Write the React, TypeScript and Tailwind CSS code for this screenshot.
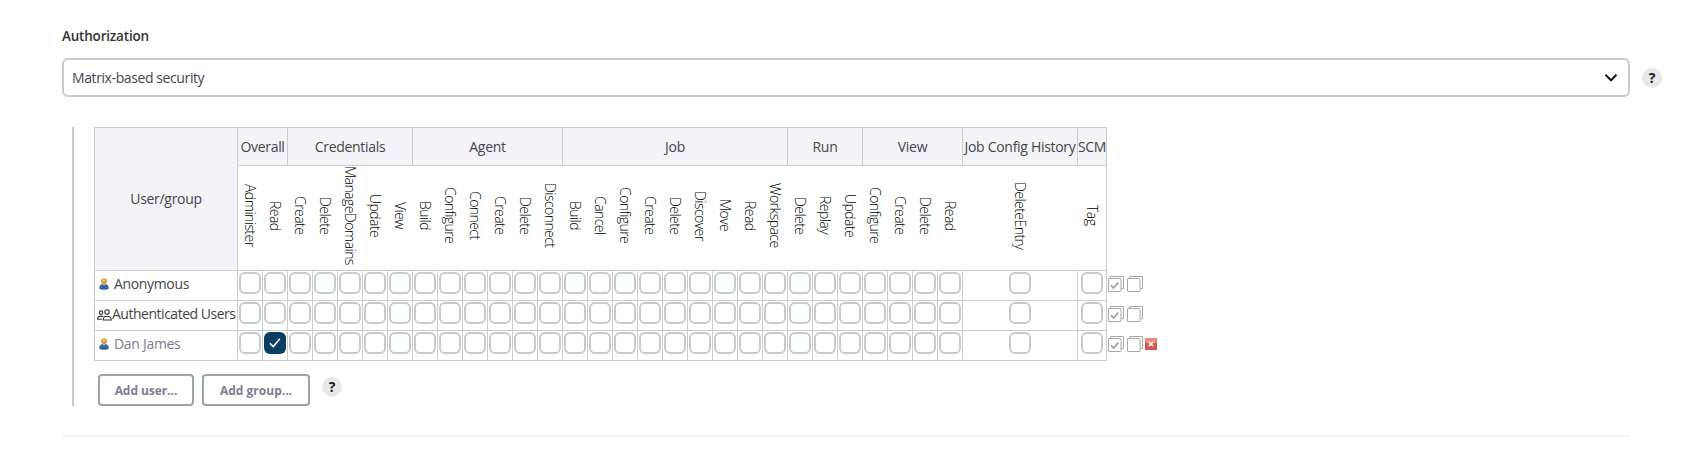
import React from "react";

const GROUPS: { name: string; width: string; permissions: string[] }[] = [
  { name: "Overall", width: "w-[50px]", permissions: ["Administer", "Read"] },
  { name: "Credentials", width: "w-[125px]", permissions: ["Create", "Delete", "ManageDomains", "Update", "View"] },
  { name: "Agent", width: "w-[150px]", permissions: ["Build", "Configure", "Connect", "Create", "Delete", "Disconnect"] },
  { name: "Job", width: "w-[225px]", permissions: ["Build", "Cancel", "Configure", "Create", "Delete", "Discover", "Move", "Read", "Workspace"] },
  { name: "Run", width: "w-[75px]", permissions: ["Delete", "Replay", "Update"] },
  { name: "View", width: "w-[100px]", permissions: ["Configure", "Create", "Delete", "Read"] },
  { name: "Job Config History", width: "w-[115px]", permissions: ["DeleteEntry"] },
  { name: "SCM", width: "w-[29px]", permissions: ["Tag"] },
];

const ROWS = [
  { name: "Anonymous", kind: "user", checked: "", removable: false, text: "tracking-[-0.35px]" },
  { name: "Authenticated Users", kind: "group", checked: "", removable: false, text: "tracking-[-0.48px] whitespace-nowrap" },
  { name: "Dan James", kind: "link", checked: "Overall.Read", removable: true, text: "tracking-[-0.3px] text-[#7d7d94]" },
];

function PersonIcon() {
  return (
    <svg width="10" height="12" viewBox="0 0 10 12" className="block shrink-0">
      <path d="M.4 11V9.200C.4 7 2.200 6 5 6s4.600 1 4.600 3.200V11C8.500 11.900 1.500 11.900.4 11Z" fill="#3568a6" />
      <path d="M3.800 6h2.400L5.300 8.800h-.6Z" fill="#b9cce6" />
      <path d="M4.600 6.800h.8l.3 2.600-.7.900-.7-.9Z" fill="#244a7c" />
      <circle cx="5" cy="3.300" r="3" fill="#e0963c" />
      <circle cx="4.600" cy="2.500" r="1.500" fill="#f3bd68" />
    </svg>
  );
}

function PeopleIcon() {
  return (
    <svg width="15" height="12" viewBox="0 0 15 12" fill="none" stroke="#333" strokeWidth="1.100" className="block shrink-0">
      <circle cx="4" cy="3.600" r="1.700" />
      <circle cx="10" cy="2.900" r="2.200" />
      <path d="M6.200 11C6 8.400 7.600 7.300 10.200 7.300S14.400 8.400 14.200 11Z" />
      <path d="M6.300 7.900C5.700 7.300 5 7.100 4 7.100 1.900 7.100.7 8 .7 9.600v.7h4.200" />
    </svg>
  );
}

function StackIcon({ checked }: { checked?: boolean }) {
  return (
    <svg width="16" height="16" viewBox="0 0 16 16" fill="none" stroke="#a8a8a8" className="block shrink-0">
      <path d="M2.500 2.500v-2h13v12h-2" />
      <rect x=".5" y="2.500" width="12.500" height="13" rx=".5" fill="#fff" />
      {checked && <path d="M3 9.400l2.500 2.600L10.300 6.600" stroke="#a0a0a0" strokeWidth="1.700" />}
    </svg>
  );
}

function RemoveIcon() {
  return (
    <svg width="12" height="12" viewBox="0 0 12 12" className="block shrink-0">
      <rect width="12" height="12" rx=".6" fill="#d9534f" />
      <rect width="12" height="5" rx=".6" fill="#e48a86" />
      <path d="M3.800 3.800l4.400 4.400M8.200 3.800l-4.400 4.400" stroke="#fdeeee" strokeWidth="1.700" />
    </svg>
  );
}

function Help() {
  return (
    <span className="flex h-5 w-5 shrink-0 items-center justify-center rounded-full bg-[#e8e8e8] text-[14px] leading-none font-bold text-[#1b1b1f]">
      ?
    </span>
  );
}

function Checkbox({ checked }: { checked: boolean }) {
  return checked ? (
    <span className="flex h-[22px] w-[22px] items-center justify-center rounded-[6px] bg-[#0b3f62]">
      <svg width="12" height="10" viewBox="0 0 12 10" fill="none" stroke="#fff" strokeWidth="1.600" strokeLinecap="round" strokeLinejoin="round">
        <path d="M1.400 5.700L4.300 8.600 10.400 1.200" />
      </svg>
    </span>
  ) : (
    <span className="block h-[22px] w-[22px] rounded-[6px] border-2 border-[#c3cbcf] bg-white" />
  );
}

export default function App() {
  return (
    <main className="h-[467px] overflow-hidden bg-white pl-[62px] font-['Open_Sans','Noto_Sans',sans-serif] text-[14px] text-[#45454b]">
      <div className="flex h-[58px] items-start pt-[26px]">
        <span className="text-[13.5px] leading-[20px] font-semibold tracking-[-0.2px] text-[#333339]">Authorization</span>
      </div>
      <div className="flex items-center gap-3">
        <div className="flex h-[39px] w-[1568px] items-center justify-between rounded-[6px] border-2 border-[#c3cbcf] pr-[10px] pl-2">
          <span className="tracking-[-0.4px]">Matrix-based security</span>
          <svg width="14" height="10" viewBox="0 0 14 10" fill="none" stroke="#18181b" strokeWidth="2">
            <path d="M1.500 1.800L7 7.300l5.500-5.500" />
          </svg>
        </div>
        <Help />
      </div>

      <section className="mt-[30px] ml-[10px] h-[279px] border-l-2 border-[#c3cbcf] pl-5">
        <div className="flex w-[1013px] border-t border-l border-[#ccc] tracking-[-0.3px]">
          <div className="flex h-[143px] w-[143px] items-center justify-center border-r border-b border-[#ccc] bg-[#f3f3f8] pb-px">
            User/group
          </div>
          <div className="w-[869px]">
            <div className="flex h-[38px]">
              {GROUPS.map((g) => (
                <div key={g.name} className={`${g.width} flex shrink-0 items-center justify-center border-r border-b border-[#ccc] bg-[#f3f3f8] whitespace-nowrap`}>
                  {g.name}
                </div>
              ))}
            </div>
            <div className="flex h-[105px] border-r border-b border-[#ccc] text-[14px] font-light tracking-[-0.55px] text-black">
              {GROUPS.map((g) => (
                <div key={g.name} className={`${g.width} flex shrink-0`}>
                  {g.permissions.map((p) => (
                    <div key={p} className="flex flex-1 items-center justify-center pr-px pb-[5px]">
                      <span className="leading-[20px] whitespace-nowrap [writing-mode:vertical-rl]">{p}</span>
                    </div>
                  ))}
                </div>
              ))}
            </div>
          </div>
        </div>
        {ROWS.map((row) => (
          <div key={row.name} className="flex h-[30px]">
            <div className="flex w-[144px] items-center border-r border-b border-l border-[#ccc] pb-[5px]">
              {row.kind === "group" ? (
                <span className="mt-[3px] ml-[2px]"><PeopleIcon /></span>
              ) : (
                <span className="mt-px mr-[5px] ml-[4px]"><PersonIcon /></span>
              )}
              <span className={row.text}>{row.name}</span>
            </div>
            {GROUPS.map((g) => (
              <div key={g.name} className={`${g.width} flex shrink-0`}>
                {g.permissions.map((p) => (
                  <div key={p} className="flex flex-1 justify-center border-r border-b border-[#ccc] pt-px">
                    <Checkbox checked={row.checked === `${g.name}.${p}`} />
                  </div>
                ))}
              </div>
            ))}
            <div className="flex items-start gap-[3px] pt-[5px] pl-px">
              <StackIcon checked />
              <StackIcon />
              {row.removable && <span className="-ml-px pt-[2px]"><RemoveIcon /></span>}
            </div>
          </div>
        ))}
        <div className="mt-[13px] ml-1 flex items-start text-[12px] font-bold text-[#7d7d94]">
          <button className="mr-2 h-8 w-24 rounded-[4px] border-2 border-[#9ba5ad] pt-[2px] tracking-[-0.05px]">Add user...</button>
          <button className="mr-3 h-8 w-[108px] rounded-[4px] border-2 border-[#9ba5ad] pt-[2px]">Add group...</button>
          <span className="mt-[3px]"><Help /></span>
        </div>
      </section>
      <hr className="mt-[29px] w-[1568px] border-t-2 border-[#f3f3f3]" />
    </main>
  );
}
